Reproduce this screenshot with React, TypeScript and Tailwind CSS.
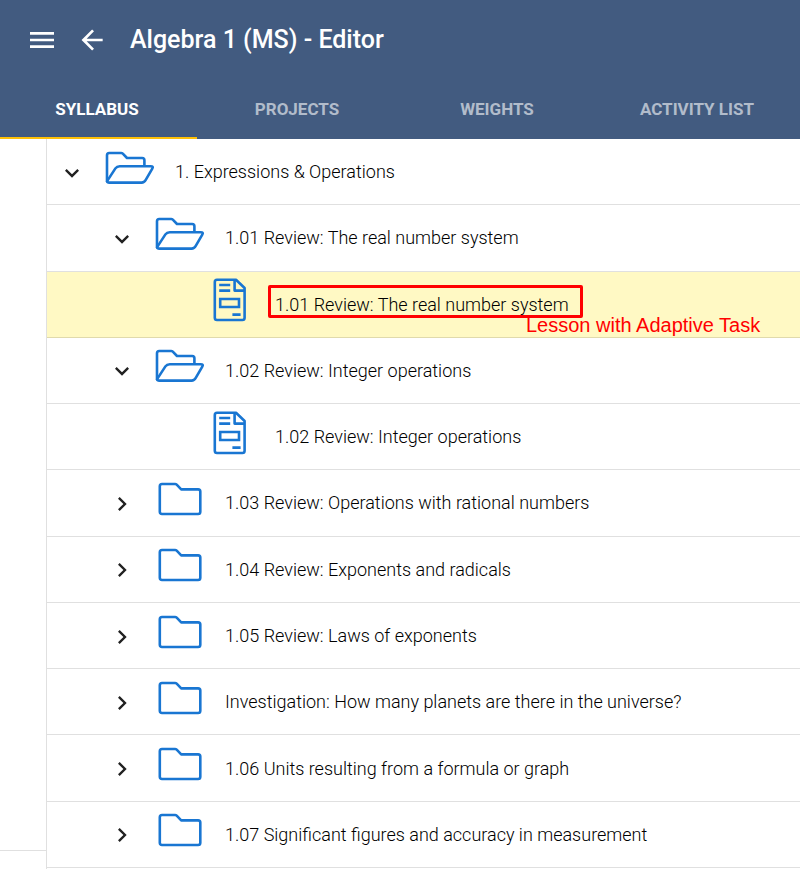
import { useState } from "react";

type Kind = "open" | "closed" | "lesson";

type Item = {
  title: string;
  level: 1 | 2 | 3;
  kind: Kind;
  note?: string;
};

const tabs = ["SYLLABUS", "PROJECTS", "WEIGHTS", "ACTIVITY LIST"];

const items: Item[] = [
  { title: "1. Expressions & Operations", level: 1, kind: "open" },
  { title: "1.01 Review: The real number system", level: 2, kind: "open" },
  {
    title: "1.01 Review: The real number system",
    level: 3,
    kind: "lesson",
    note: "Lesson with Adaptive Task",
  },
  { title: "1.02 Review: Integer operations", level: 2, kind: "open" },
  { title: "1.02 Review: Integer operations", level: 3, kind: "lesson" },
  { title: "1.03 Review: Operations with rational numbers", level: 2, kind: "closed" },
  { title: "1.04 Review: Exponents and radicals", level: 2, kind: "closed" },
  { title: "1.05 Review: Laws of exponents", level: 2, kind: "closed" },
  { title: "Investigation: How many planets are there in the universe?", level: 2, kind: "closed" },
  { title: "1.06 Units resulting from a formula or graph", level: 2, kind: "closed" },
  { title: "1.07 Significant figures and accuracy in measurement", level: 2, kind: "closed" },
];

const indent = {
  1: "pl-[11px]",
  2: "pl-[61px]",
  3: "pl-[111px]",
};

const ItemIcon = ({ kind }: { kind: Kind }) => (
  <svg
    viewBox="0 0 50 44"
    className="h-[44px] w-[50px]"
    fill="none"
    stroke="#1976d2"
    strokeWidth="2.6"
    strokeLinejoin="round"
    aria-hidden="true"
  >
    {kind === "open" && (
      <>
        <path d="M2 36V9.2Q2 7 4.2 7H16.1Q17.1 7 17.8 7.7L22 12H37.2Q39.4 12 39.4 14.2V20" />
        <path d="M14.8 20.2H45.6Q48.8 20.2 47.3 22.6L40.6 34.2Q39.3 36.6 36.6 36.6H4Q1.2 36.6 2.6 34.4L10.4 22.4Q11.9 20.2 14.8 20.2Z" />
      </>
    )}
    {kind === "closed" && (
      <path d="M4.8 9.2Q4.8 7 7 7H20Q21 7 21.7 7.7L26.2 12.4H43.1Q45.3 12.4 45.3 14.6V34.8Q45.3 37 43.1 37H7Q4.8 37 4.8 34.8Z" />
    )}
    {kind === "lesson" && (
      <>
        <path d="M12 1.8H31L39.6 10V39.8Q39.6 42 37.4 42H12Q9.8 42 9.8 39.8V4Q9.8 1.8 12 1.8Z" />
        <path d="M29.6 1.8V12.6H39.8M14.2 7H25.2M14.2 12.6H25.2M27.4 36.6H35.6" />
        <path strokeLinejoin="miter" d="M15.2 21H34V29H15.2Z" />
      </>
    )}
  </svg>
);

const Chevron = ({ open }: { open: boolean }) => (
  <svg viewBox="0 0 24 24" className="size-7" fill="currentColor" aria-hidden="true">
    {open ? (
      <path d="M7.41 8.58 12 13.17l4.59-4.59L18 10l-6 6-6-6z" />
    ) : (
      <path d="M8.59 16.58 13.17 12 8.59 7.41 10 6l6 6-6 6z" />
    )}
  </svg>
);

const Row = ({ item }: { item: Item }) => (
  <li
    className={`flex items-center border-b border-black/12 pt-0.5 ${indent[item.level]} ${
      item.note ? "bg-[#fff9c4]" : "bg-white"
    }`}
  >
    {item.kind === "lesson" ? (
      <span className="w-7 shrink-0" />
    ) : (
      <button
        type="button"
        className="shrink-0"
        aria-expanded={item.kind === "open"}
        aria-label={item.title}
      >
        <Chevron open={item.kind === "open"} />
      </button>
    )}
    <span className="ml-[19px] shrink-0 pb-2.5">
      <ItemIcon kind={item.kind} />
    </span>
    <span className="relative ml-5 pb-px text-lg font-light leading-6 text-black">
      {item.title}
      {item.note && (
        <>
          <span className="absolute -left-[7px] -right-3.5 -top-2 bottom-0 rounded-xs border-[3px] border-[#ff0000]" />
          <span className="absolute left-[251px] top-5 whitespace-nowrap font-['Liberation_Sans',sans-serif] text-xl font-normal leading-6 text-[#ff0000]">
            {item.note}
          </span>
        </>
      )}
    </span>
  </li>
);

const App = () => {
  const [active, setActive] = useState(0);

  return (
    <div className="flex min-h-screen flex-col overflow-x-hidden bg-white font-['Roboto',sans-serif] text-[#212121]">
      <header className="bg-[#425b80] text-white">
        <div className="flex h-20 items-center px-[26px]">
          <button type="button" aria-label="Menu">
            <svg viewBox="0 0 24 24" className="size-8" fill="currentColor">
              <path d="M3 6h18v2H3zM3 11h18v2H3zM3 16h18v2H3z" />
            </svg>
          </button>
          <button type="button" aria-label="Back" className="ml-[18px]">
            <svg viewBox="0 0 24 24" className="size-8" fill="currentColor">
              <path d="M20 11v2H8l5.5 5.5-1.42 1.42L4.16 12l7.92-7.92L13.5 5.5 8 11z" />
            </svg>
          </button>
          <h1 className="ml-[22px] text-[25px] font-medium leading-8">Algebra 1 (MS) - Editor</h1>
        </div>
        <div role="tablist" className="-ml-[3px] mr-[3px] flex h-[59px]">
          {tabs.map((tab, i) => (
            <button
              key={tab}
              type="button"
              role="tab"
              aria-selected={active === i}
              onClick={() => setActive(i)}
              className={`flex-1 border-b-2 pt-0.5 text-[17px] font-bold ${
                active === i ? "border-[#ffc107] text-white" : "border-transparent text-white/60"
              }`}
            >
              {tab}
            </button>
          ))}
        </div>
      </header>

      <main className="flex flex-1">
        <aside className="w-[46px] shrink-0 pb-[18px]">
          <div className="h-full border-b border-black/12" />
        </aside>
        <ul className="grid flex-1 auto-rows-fr border-l border-black/12 pb-px">
          {items.map((item, i) => (
            <Row key={i} item={item} />
          ))}
        </ul>
      </main>
    </div>
  );
};

export default App;
